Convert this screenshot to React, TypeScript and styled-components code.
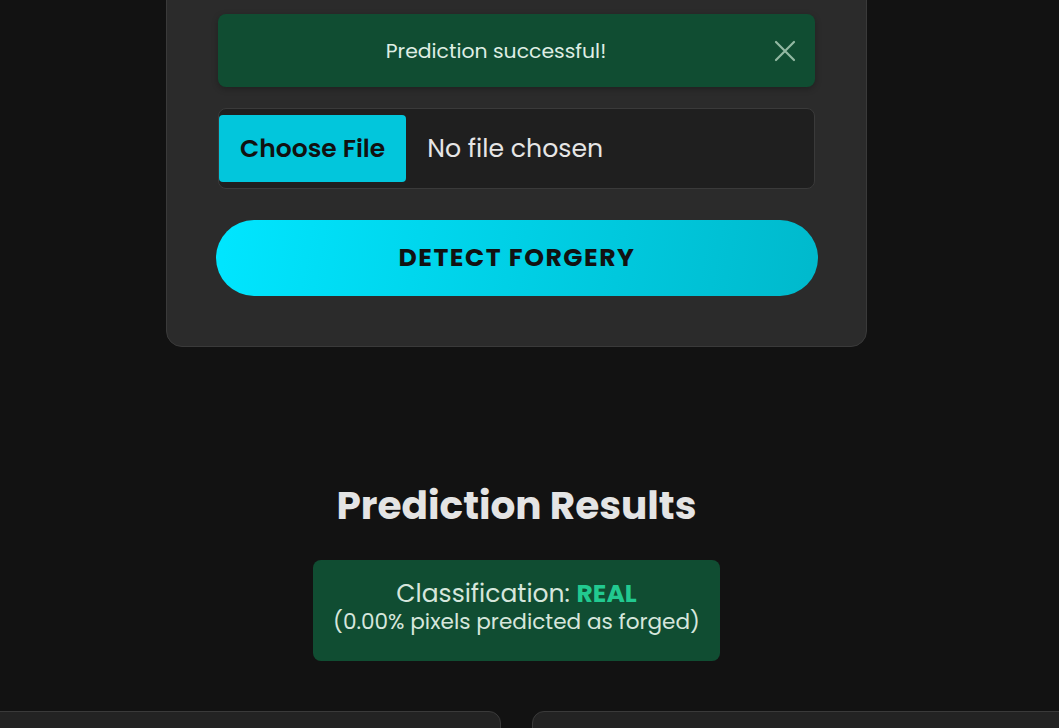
import styled, { createGlobalStyle } from 'styled-components';

const GlobalStyle = createGlobalStyle`
  html, body {
    margin: 0;
    padding: 0;
    background: #121212;
    overflow: hidden;
  }
  body {
    font-family: Poppins, "Open Sans", "Noto Sans", sans-serif;
    color: #e0e0e0;
  }
`;

const Page = styled.main`
  width: 1033px;
  display: flex;
  flex-direction: column;
  align-items: center;
`;

const UploadCard = styled.section`
  box-sizing: border-box;
  width: 701px;
  margin-top: -37px;
  padding: 50px 51px 50px;
  background: #2b2b2b;
  border: 1px solid #3a3a3a;
  border-radius: 16px;
  display: flex;
  flex-direction: column;
`;

const Alert = styled.div`
  height: 73px;
  padding-right: 19px;
  display: flex;
  align-items: center;
  background: #104d32;
  border-radius: 8px;
  box-shadow: 0 2px 6px rgba(0, 0, 0, 0.25);
  font-size: 20.4px;
  color: #dfeee4;
`;

const AlertText = styled.span`
  flex: 1;
  text-align: center;
`;

const CloseButton = styled.button`
  width: 22px;
  height: 22px;
  padding: 0;
  border: none;
  background: transparent;
  display: flex;
  align-items: center;
  justify-content: center;
  cursor: pointer;
`;

const FileField = styled.label`
  box-sizing: border-box;
  margin-top: 21px;
  height: 81px;
  padding: 6px 0;
  display: flex;
  align-items: center;
  gap: 21px;
  background: #1f1f1f;
  border: 1px solid #3a3a3a;
  border-radius: 8px;
`;

const FileButton = styled.span`
  height: 67px;
  padding: 0 21px;
  display: flex;
  align-items: center;
  background: #02c6dc;
  border-radius: 4px;
  color: #111;
  font-size: 25px;
  font-weight: 600;
`;

const FileName = styled.span`
  font-size: 25.2px;
  color: #e6e6e6;
`;

const DetectButton = styled.button`
  margin: 31px -3px 0 -2px;
  height: 76px;
  border: none;
  border-radius: 38px;
  background: linear-gradient(100deg, #00e6ff 0%, #00b9cc 100%);
  color: #121212;
  font-family: inherit;
  font-size: 25.2px;
  font-weight: 700;
  letter-spacing: 1.5px;
  cursor: pointer;
`;

const ResultsTitle = styled.h2`
  margin: 136px 0 0;
  font-size: 39px;
  font-weight: 700;
  color: #e4e4e4;
  line-height: 1.2;
`;

const ResultBox = styled.div`
  margin-top: 30px;
  padding: 20px 20px 25px;
  background: #104d32;
  border-radius: 8px;
  text-align: center;
  color: #d6e6dc;
`;

const ClassLine = styled.div`
  font-size: 25px;
  line-height: 28px;
`;

const Verdict = styled.strong`
  color: #22c990;
  font-weight: 700;
`;

const DetailLine = styled.div`
  font-size: 21.6px;
  line-height: 28px;
`;

const Panels = styled.div`
  margin-top: 50px;
  display: grid;
  grid-template-columns: 560px 560px;
  gap: 31px;
`;

const Panel = styled.div`
  height: 300px;
  background: #232323;
  border: 1px solid #3a3a3a;
  border-radius: 12px;
`;

export default function App() {
  return (
    <>
      <GlobalStyle />
      <Page>
        <UploadCard>
          <Alert>
            <AlertText>Prediction successful!</AlertText>
            <CloseButton aria-label="Close">
              <svg width="22" height="22" viewBox="0 0 22 22">
                <path d="M2 2 L20 20 M20 2 L2 20" stroke="#93b9a3" strokeWidth="2.2" strokeLinecap="round" />
              </svg>
            </CloseButton>
          </Alert>
          <FileField>
            <FileButton>Choose File</FileButton>
            <FileName>No file chosen</FileName>
          </FileField>
          <DetectButton>DETECT FORGERY</DetectButton>
        </UploadCard>
        <ResultsTitle>Prediction Results</ResultsTitle>
        <ResultBox>
          <ClassLine>
            Classification: <Verdict>REAL</Verdict>
          </ClassLine>
          <DetailLine>(0.00% pixels predicted as forged)</DetailLine>
        </ResultBox>
        <Panels>
          <Panel />
          <Panel />
        </Panels>
      </Page>
    </>
  );
}
